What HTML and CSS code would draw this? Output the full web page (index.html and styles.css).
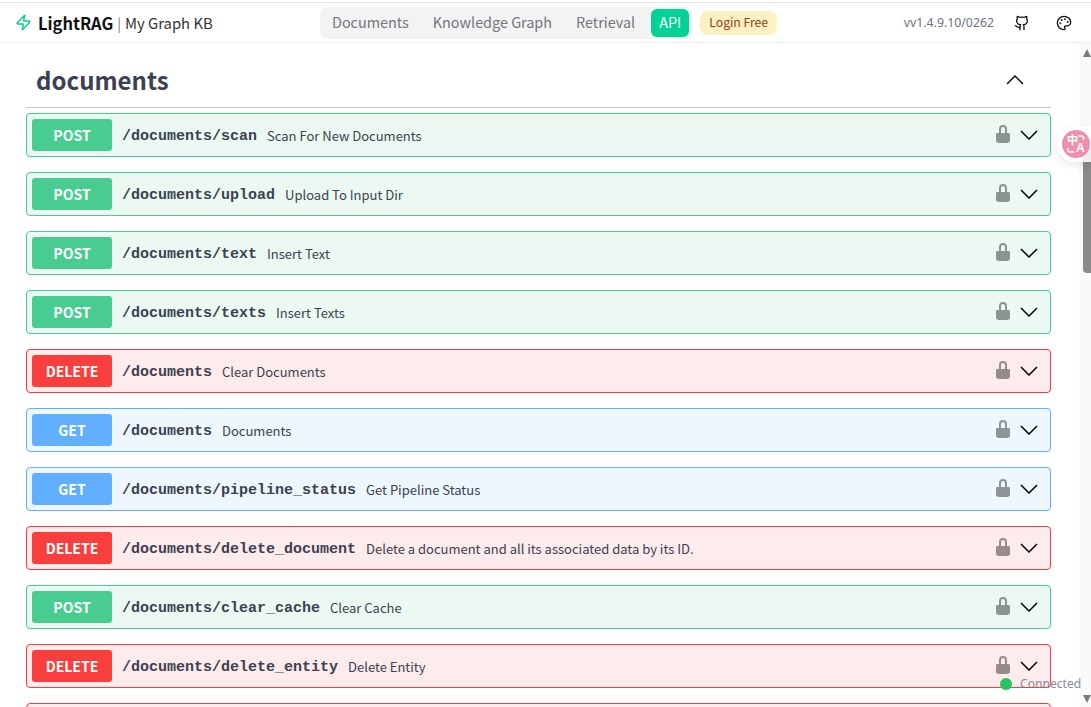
FILE: index.html
```html
<!DOCTYPE html>
<html lang="en">
<head>
<meta charset="utf-8">
<title>LightRAG</title>
<link rel="stylesheet" href="styles.css">
</head>
<body>
<svg class="defs" width="0" height="0" aria-hidden="true">
  <symbol id="lock" viewBox="0 0 14 18"><path d="M4 9V4a3 3 0 0 1 6 0V9" fill="none" stroke="currentColor" stroke-width="2"/><path d="M1.4 8h11.2A1.4 1.4 0 0 1 14 9.4v6.4c0 .9-.6 1.4-1.2 1.6-.9.4-2.4.6-3.4.6H4.600c-1 0-2.500-.2-3.400-.6C.6 17.200 0 16.700 0 15.800V9.400A1.400 1.400 0 0 1 1.400 8z" fill="currentColor"/></symbol>
  <symbol id="chev" viewBox="0 0 18 10"><path d="M1 1l8 8 8-8" fill="none" stroke="currentColor" stroke-width="1.5"/></symbol>
</svg>
<div class="app">
  <header class="topbar">
    <div class="brand">
      <svg class="bolt" viewBox="0 0 24 24" width="17" height="17" fill="none" stroke="#10c98f" stroke-width="2.1" stroke-linejoin="round" stroke-linecap="round"><path d="M4 14a1 1 0 0 1-.78-1.63l9.9-10.2a.5.5 0 0 1 .86.46l-1.92 6.02A1 1 0 0 0 13 10h7a1 1 0 0 1 .78 1.63l-9.9 10.2a.5.5 0 0 1-.86-.46l1.92-6.02A1 1 0 0 0 11 14z"/></svg>
      <strong>LightRAG</strong><span class="sep">|</span><span class="kb">My Graph KB</span>
    </div>
    <nav class="tabs">
      <a class="tab">Documents</a>
      <a class="tab">Knowledge Graph</a>
      <a class="tab">Retrieval</a>
      <a class="tab active">API</a>
    </nav>
    <span class="login">Login Free</span>
    <div class="right">
      <span class="version">vv1.4.9.10/0262</span>
      <svg class="ico gh" viewBox="0 0 24 24" width="16" height="16" fill="none" stroke="#111" stroke-width="2" stroke-linecap="round" stroke-linejoin="round"><path d="M15 22v-4a4.8 4.8 0 0 0-1-3.5c3 0 6-2 6-5.5.08-1.25-.27-2.48-1-3.5.28-1.15.28-2.35 0-3.5 0 0-1 0-3 1.5-2.64-.5-5.36-.5-8 0C6 2 5 2 5 2c-.3 1.15-.3 2.35 0 3.5A5.4 5.4 0 0 0 4 9c0 3.5 3 5.5 6 5.5-.39.49-.68 1.05-.85 1.65-.17.6-.22 1.23-.15 1.85v4"/><path d="M9 18c-4.51 2-5-2-7-2"/></svg>
      <svg class="ico pal" viewBox="0 0 24 24" width="16" height="16" fill="none" stroke="#111" stroke-width="2" stroke-linecap="round" stroke-linejoin="round"><circle cx="13.5" cy="6.5" r=".5" fill="#111"/><circle cx="17.5" cy="10.5" r=".5" fill="#111"/><circle cx="8.5" cy="7.5" r=".5" fill="#111"/><circle cx="6.5" cy="12.5" r=".5" fill="#111"/><path d="M12 2C6.5 2 2 6.5 2 12s4.5 10 10 10c.93 0 1.65-.75 1.65-1.69 0-.44-.18-.83-.44-1.12-.29-.29-.44-.65-.44-1.12a1.64 1.64 0 0 1 1.67-1.67h2c3.05 0 5.55-2.5 5.55-5.55C21.97 6.01 17.46 2 12 2z"/></svg>
    </div>
  </header>
  <main class="content">
    <div class="section-head">
      <h3>documents</h3>
      <svg class="collapse" width="18" height="10"><use href="#chev"/></svg>
    </div>
    <div class="ops">
      <div class="op post"><span class="method">POST</span><span class="path">/documents/scan</span><span class="desc">Scan For New Documents</span><svg class="lock" width="14" height="18"><use href="#lock"/></svg><svg class="chev" width="18" height="10"><use href="#chev"/></svg></div>
      <div class="op post"><span class="method">POST</span><span class="path">/documents/upload</span><span class="desc">Upload To Input Dir</span><svg class="lock" width="14" height="18"><use href="#lock"/></svg><svg class="chev" width="18" height="10"><use href="#chev"/></svg></div>
      <div class="op post"><span class="method">POST</span><span class="path">/documents/text</span><span class="desc">Insert Text</span><svg class="lock" width="14" height="18"><use href="#lock"/></svg><svg class="chev" width="18" height="10"><use href="#chev"/></svg></div>
      <div class="op post"><span class="method">POST</span><span class="path">/documents/texts</span><span class="desc">Insert Texts</span><svg class="lock" width="14" height="18"><use href="#lock"/></svg><svg class="chev" width="18" height="10"><use href="#chev"/></svg></div>
      <div class="op delete"><span class="method">DELETE</span><span class="path">/documents</span><span class="desc">Clear Documents</span><svg class="lock" width="14" height="18"><use href="#lock"/></svg><svg class="chev" width="18" height="10"><use href="#chev"/></svg></div>
      <div class="op get"><span class="method">GET</span><span class="path">/documents</span><span class="desc">Documents</span><svg class="lock" width="14" height="18"><use href="#lock"/></svg><svg class="chev" width="18" height="10"><use href="#chev"/></svg></div>
      <div class="op get"><span class="method">GET</span><span class="path">/documents/pipeline_status</span><span class="desc">Get Pipeline Status</span><svg class="lock" width="14" height="18"><use href="#lock"/></svg><svg class="chev" width="18" height="10"><use href="#chev"/></svg></div>
      <div class="op delete"><span class="method">DELETE</span><span class="path">/documents/delete_document</span><span class="desc">Delete a document and all its associated data by its ID.</span><svg class="lock" width="14" height="18"><use href="#lock"/></svg><svg class="chev" width="18" height="10"><use href="#chev"/></svg></div>
      <div class="op post"><span class="method">POST</span><span class="path">/documents/clear_cache</span><span class="desc">Clear Cache</span><svg class="lock" width="14" height="18"><use href="#lock"/></svg><svg class="chev" width="18" height="10"><use href="#chev"/></svg></div>
      <div class="op delete"><span class="method">DELETE</span><span class="path">/documents/delete_entity</span><span class="desc">Delete Entity</span><svg class="lock" width="14" height="18"><use href="#lock"/></svg><svg class="chev" width="18" height="10"><use href="#chev"/></svg></div>
      <div class="op delete"></div>
    </div>
  </main>
  <div class="scrollbar"><span class="arrow up"></span><span class="thumb"></span><span class="arrow down"></span></div>
  <div class="translate"><span class="translate-disc"><span class="t-zh">中</span><span class="t-en">A</span><svg class="t-corners" viewBox="0 0 28 28" width="28" height="28" fill="none" stroke="#fff" stroke-width="1.5"><path d="M16 6h3.500a2 2 0 0 1 2 2v2"/><path d="M6 18v2a2 2 0 0 0 2 2h4"/></svg></span></div>
  <div class="status"><span class="dot"></span><span class="status-text">Connected</span></div>
</div>
</body>
</html>
```
FILE: styles.css
```css
* { box-sizing: border-box; }
html, body { margin: 0; height: 100%; overflow: hidden; background: #fff; }
.defs { position: absolute; }
.app {
  position: relative;
  height: 707px;
  display: flex;
  flex-direction: column;
  padding-top: 2px;
  font-family: "Noto Sans CJK SC", "Noto Sans", sans-serif;
  overflow: hidden;
}
.topbar {
  flex: none;
  height: 41px;
  display: flex;
  align-items: center;
  padding: 0 16px 0 15px;
  border-top: 1px solid #e5e5e5;
  border-bottom: 1px solid #efefef;
}
.brand { display: flex; align-items: center; width: 305px; font-size: 16.5px; color: #111; }
.bolt { margin-right: 6px; flex: none; }
.brand strong { font-weight: 700; }
.sep { color: #777; margin: 0 4px; font-size: 14px; }
.kb { font-size: 14.8px; color: #333; }
.tabs {
  display: flex;
  align-items: center;
  height: 32px;
  padding: 0 3px 0 0;
  background: #f3f3f3;
  border-radius: 8px;
}
.tab { font-size: 14.4px; color: #70757e; padding: 0 12px; height: 28px; line-height: 26px; }
.tab.active { background: #00d395; color: #fff; border-radius: 6px; padding: 0 8px; margin-left: 4px; }
.login {
  margin-left: 8px;
  height: 24px;
  line-height: 22px;
  padding: 0 9px;
  border-radius: 8px;
  background: #fdf1c4;
  color: #92400e;
  font-size: 12.2px;
}
.right { margin-left: auto; display: flex; align-items: center; padding-right: 3px; }
.version { font-size: 12.3px; color: #6b7280; font-family: "Noto Sans", sans-serif; margin-right: 20px; }
.ico { display: block; }
.gh { margin-right: 26px; }
.content { flex: 1; padding: 0 40px 0 26px; overflow: hidden; }
.section-head {
  display: flex;
  align-items: center;
  justify-content: space-between;
  height: 65px;
  padding: 8px 27px 0 10px;
  border-bottom: 1px solid #c9c9c9;
}
.section-head h3 { margin: 0; font-size: 24px; font-weight: 700; color: #3b4151; }
.collapse { color: #111; margin-top: 2px; transform: scaleY(-1); }
.ops { display: flex; flex-direction: column; gap: 15px; padding-top: 5px; }
.op {
  flex: none;
  height: 44px;
  display: flex;
  align-items: center;
  padding: 0 12px 0 5px;
  border: 1px solid;
  border-radius: 4px;
  color: #3b4151;
}
.post { background: #ebf9f2; border-color: #49cc90; }
.delete { background: #feebeb; border-color: #f93e3e; }
.get { background: #eef6fe; border-color: #61affe; }
.method {
  flex: none;
  width: 80px;
  height: 32px;
  line-height: 32px;
  text-align: center;
  border-radius: 3px;
  color: #fff;
  font-size: 14px;
  font-weight: 700;
}
.post .method { background: #49cc90; }
.delete .method { background: #f93e3e; }
.get .method { background: #61affe; }
.path { margin-left: 10px; padding-top: 2px; font-family: "Liberation Mono", monospace; font-size: 15px; font-weight: 700; }
.desc { margin-left: 10px; font-size: 13px; }
.lock { margin-left: auto; color: #000; opacity: .4; margin-right: 10px; margin-top: -2px; }
.chev { color: #000; margin-top: -1px; }
.scrollbar {
  position: absolute; top: 43px; right: 0; bottom: 0; width: 12px;
  background: #fafafa;
}
.thumb { position: absolute; top: 104px; right: 0; width: 8px; height: 126px; background: #8a8a8a; border-radius: 4px 0 0 4px; }
.arrow { position: absolute; right: 0; width: 0; height: 0; border-left: 4.5px solid transparent; border-right: 4.5px solid transparent; }
.up { top: 6px; border-bottom: 8px solid #7c7c7c; }
.down { bottom: 4px; border-top: 8px solid #7c7c7c; }
.translate {
  position: absolute; top: 126px; right: 0; width: 34px; height: 36px;
  background: rgba(255,255,255,.86); border-radius: 18px 0 0 18px;
  box-shadow: 0 3px 9px rgba(0,0,0,.1);
  display: flex; align-items: center; padding-left: 5px;
}
.translate-disc {
  position: relative;
  flex: none;
  width: 28px; height: 28px; border-radius: 50%; background: rgba(236,120,152,.82); color: #fff;
  font-weight: 700;
}
.t-zh { position: absolute; left: 5px; top: 3px; font-size: 11px; line-height: 13px; }
.t-en { position: absolute; left: 14px; top: 11px; font-size: 12px; line-height: 14px; font-family: "Liberation Sans", sans-serif; }
.t-corners { position: absolute; left: 0; top: 0; }
.status { position: absolute; left: 1000px; top: 675px; display: flex; align-items: center; gap: 8px; font-size: 12.1px; font-family: "Noto Sans", sans-serif; }
.status-text { color: #6b7280; opacity: .8; }
.dot { width: 12px; height: 12px; border-radius: 50%; background: #22c55e; }
```
